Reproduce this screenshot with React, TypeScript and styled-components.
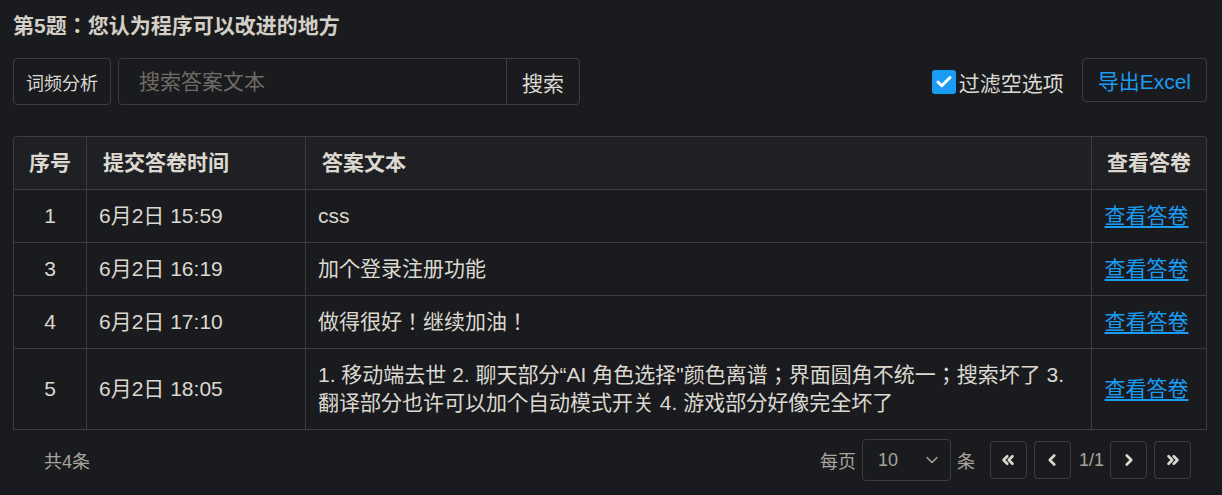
import React from 'react';
import styled, { createGlobalStyle } from 'styled-components';
import { Check, ChevronDown, ChevronLeft, ChevronRight, ChevronsLeft, ChevronsRight } from 'lucide-react';

const colors = {
    bg: '#1a1b1e',
    headBg: '#1f2023',
    border: '#3c3d41',
    fg: '#dcd8d0',
    dim: '#a8a49c',
    placeholder: '#6e6b66',
    blue: '#1a9cf2',
};

const GlobalStyle = createGlobalStyle`
    html, body {
        margin: 0;
        background: ${colors.bg};
    }
    body {
        font-family: "Liberation Sans", "Noto Sans CJK JP", sans-serif;
        color: ${colors.fg};
    }
    * {
        box-sizing: border-box;
    }
`;

const Page = styled.div`
    width: 1222px;
    height: 495px;
    padding: 12px 15px 0 13px;
    background: ${colors.bg};
`;

const Title = styled.h2`
    margin: 0;
    font-size: 21px;
    line-height: 28px;
    font-weight: 700;
    color: #d3cfc7;
`;

const Toolbar = styled.div`
    display: flex;
    align-items: center;
    margin-top: 18px;
    height: 47px;
`;

const OutlineButton = styled.button<{ $accent?: boolean; $size?: number }>`
    height: 100%;
    padding: 0 12px;
    border: 1px solid ${colors.border};
    border-radius: 4px;
    background: transparent;
    font-family: inherit;
    font-size: ${props => props.$size ?? 18}px;
    color: ${props => props.$accent ? colors.blue : colors.fg};
    cursor: pointer;
`;

const SearchGroup = styled.div`
    display: flex;
    margin-left: 7px;
    width: 462px;
    height: 100%;
    border: 1px solid ${colors.border};
    border-radius: 4px;
    overflow: hidden;
`;

const SearchInput = styled.input`
    flex: 1;
    min-width: 0;
    padding: 0 20px;
    border: none;
    background: transparent;
    font-family: inherit;
    font-size: 21px;
    color: ${colors.fg};
    outline: none;

    &::placeholder {
        color: ${colors.placeholder};
    }
`;

const SearchButton = styled.button`
    width: 73px;
    border: none;
    border-left: 1px solid ${colors.border};
    background: transparent;
    font-family: inherit;
    font-size: 21px;
    color: ${colors.fg};
`;

const Spacer = styled.div`
    flex: 1;
`;

const FilterLabel = styled.label`
    display: flex;
    align-items: center;
    gap: 3px;
    margin-right: 18px;
    font-size: 21px;
    color: ${colors.fg};
`;

const CheckBox = styled.span`
    display: flex;
    align-items: center;
    justify-content: center;
    width: 24px;
    height: 24px;
    border-radius: 3px;
    background: ${colors.blue};
    color: #fff;
`;

const ExportButton = styled(OutlineButton)`
    height: 44px;
    padding: 0 15px;
    margin-top: -3px;
`;

const TableWrap = styled.div`
    margin-top: 31px;
    border: 1px solid ${colors.border};
    border-bottom: none;
    border-radius: 4px 4px 0 0;
    overflow: hidden;
`;

const Table = styled.table`
    width: 100%;
    border-collapse: separate;
    border-spacing: 0;
    table-layout: fixed;
    font-size: 21px;
    line-height: 28px;
`;

const Th = styled.th<{ $center?: boolean }>`
    height: 53px;
    padding: 0 ${props => props.$center ? 0 : 16}px;
    background: ${colors.headBg};
    font-weight: 700;
    white-space: nowrap;
    text-align: ${props => props.$center ? 'center' : 'left'};
    color: ${colors.fg};
    border-right: 1px solid ${colors.border};
    border-bottom: 1px solid ${colors.border};

    &:last-child {
        border-right: none;
    }
`;

const Td = styled.td<{ $center?: boolean }>`
    height: 53px;
    padding: 12px ${props => props.$center ? 0 : 12}px;
    text-align: ${props => props.$center ? 'center' : 'left'};
    vertical-align: middle;
    color: ${colors.fg};
    border-right: 1px solid ${colors.border};
    border-bottom: 1px solid ${colors.border};

    &:last-child {
        border-right: none;
    }
`;

const Link = styled.a`
    margin-right: 5px;
    color: ${colors.blue};
    text-decoration: underline;
    text-underline-offset: 3px;
    cursor: pointer;
`;

const Footer = styled.div`
    display: flex;
    align-items: center;
    padding: 9px 16px 0 31px;
    font-size: 18px;
    color: ${colors.dim};
`;

const PageSize = styled.div`
    display: flex;
    align-items: center;
    gap: 6px;
`;

const Select = styled.div`
    display: flex;
    align-items: center;
    justify-content: space-between;
    width: 89px;
    height: 42px;
    padding: 0 8px 0 15px;
    border: 1px solid ${colors.border};
    border-radius: 4px;
    font-size: 18px;
    color: ${colors.dim};
`;

const Pager = styled.div`
    display: flex;
    align-items: center;
    gap: 7px;
    margin-left: 15px;
`;

const PageButton = styled.button`
    display: flex;
    align-items: center;
    justify-content: center;
    width: 37px;
    height: 38px;
    padding: 0;
    border: 1px solid ${colors.border};
    border-radius: 4px;
    background: transparent;
    color: ${colors.fg};
`;

const PageInfo = styled.span`
    margin: 0 -1px 0 1px;
    font-size: 18px;
    color: ${colors.dim};
`;

type Row = { id: number; time: string; text: string };

const rows: Row[] = [
    { id: 1, time: '6月2日 15:59', text: 'css' },
    { id: 3, time: '6月2日 16:19', text: '加个登录注册功能' },
    { id: 4, time: '6月2日 17:10', text: '做得很好！继续加油！' },
    { id: 5, time: '6月2日 18:05', text: '1. 移动端去世 2. 聊天部分“AI 角色选择"颜色离谱；界面圆角不统一；搜索坏了 3. 翻译部分也许可以加个自动模式开关 4. 游戏部分好像完全坏了' },
];

export default function App() {
    return (
        <>
            <GlobalStyle />
            <Page>
                <Title>第5题：您认为程序可以改进的地方</Title>
                <Toolbar>
                    <OutlineButton>词频分析</OutlineButton>
                    <SearchGroup>
                        <SearchInput placeholder="搜索答案文本" />
                        <SearchButton>搜索</SearchButton>
                    </SearchGroup>
                    <Spacer />
                    <FilterLabel>
                        <CheckBox><Check size={18} strokeWidth={4} /></CheckBox>
                        过滤空选项
                    </FilterLabel>
                    <ExportButton $accent $size={21}>导出Excel</ExportButton>
                </Toolbar>
                <TableWrap>
                    <Table>
                        <colgroup>
                            <col style={{ width: 73 }} />
                            <col style={{ width: 219 }} />
                            <col />
                            <col style={{ width: 114 }} />
                        </colgroup>
                        <thead>
                            <tr>
                                <Th $center>序号</Th>
                                <Th>提交答卷时间</Th>
                                <Th>答案文本</Th>
                                <Th $center>查看答卷</Th>
                            </tr>
                        </thead>
                        <tbody>
                            {rows.map(r => (
                                <tr key={r.id}>
                                    <Td $center>{r.id}</Td>
                                    <Td>{r.time}</Td>
                                    <Td>{r.text}</Td>
                                    <Td $center><Link>查看答卷</Link></Td>
                                </tr>
                            ))}
                        </tbody>
                    </Table>
                </TableWrap>
                <Footer>
                    共4条
                    <Spacer />
                    <PageSize>
                        每页
                        <Select>
                            10
                            <ChevronDown size={20} strokeWidth={1.75} />
                        </Select>
                        条
                    </PageSize>
                    <Pager>
                        <PageButton><ChevronsLeft size={18} strokeWidth={3.5} /></PageButton>
                        <PageButton><ChevronLeft size={18} strokeWidth={3.5} /></PageButton>
                        <PageInfo>1/1</PageInfo>
                        <PageButton><ChevronRight size={18} strokeWidth={3.5} /></PageButton>
                        <PageButton><ChevronsRight size={18} strokeWidth={3.5} /></PageButton>
                    </Pager>
                </Footer>
            </Page>
        </>
    );
}
